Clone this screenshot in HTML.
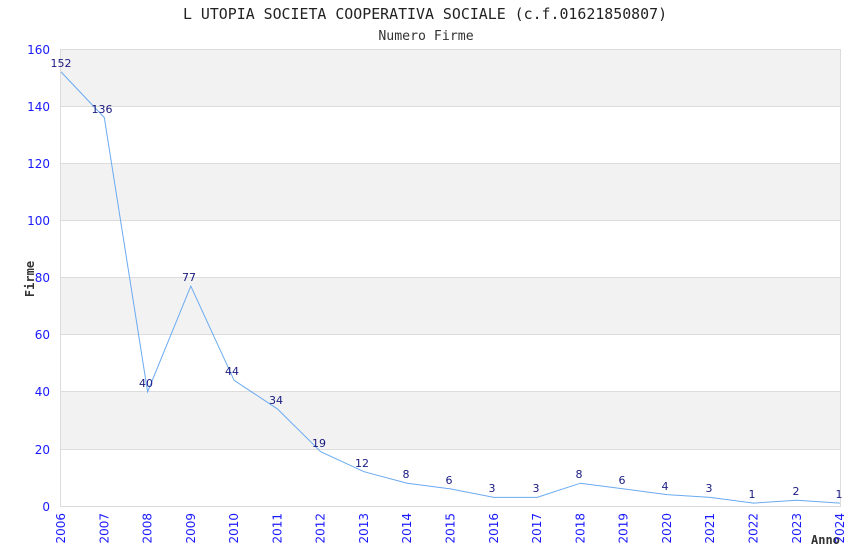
<!DOCTYPE html>
<html><head><meta charset="utf-8"><style>html,body{margin:0;padding:0;background:#fff;}svg{display:block}</style></head>
<body>
<svg width="850" height="550" xmlns="http://www.w3.org/2000/svg">
<rect width="850" height="550" fill="#fff"/>
<text x="425" y="19" text-anchor="middle" font-family="DejaVu Sans Mono, monospace" font-size="14.9" fill="#222">L UTOPIA SOCIETA COOPERATIVA SOCIALE (c.f.01621850807)</text>
<text x="426" y="40" text-anchor="middle" font-family="DejaVu Sans Mono, monospace" font-size="13.2" fill="#333">Numero Firme</text>
<g fill="#f2f2f2">
<rect x="61" y="49" width="779" height="57.1"/>
<rect x="61" y="163.3" width="779" height="57.1"/>
<rect x="61" y="277.5" width="779" height="57.1"/>
<rect x="61" y="391.8" width="779" height="57.1"/>
</g>
<g stroke="#dcdcdc" stroke-width="1">
<line x1="61" y1="49.5" x2="840" y2="49.5"/>
<line x1="61" y1="106.5" x2="840" y2="106.5"/>
<line x1="61" y1="163.5" x2="840" y2="163.5"/>
<line x1="61" y1="220.5" x2="840" y2="220.5"/>
<line x1="61" y1="277.5" x2="840" y2="277.5"/>
<line x1="61" y1="334.5" x2="840" y2="334.5"/>
<line x1="61" y1="391.5" x2="840" y2="391.5"/>
<line x1="61" y1="449.5" x2="840" y2="449.5"/>
<line x1="60.5" y1="49" x2="60.5" y2="506"/>
<line x1="840.5" y1="49" x2="840.5" y2="506"/>
<line x1="60" y1="506.5" x2="841" y2="506.5"/>
</g>
<g font-family="DejaVu Sans, sans-serif" font-size="12" fill="#1a1aff" text-anchor="end">
<text x="50" y="54">160</text><text x="50" y="111">140</text><text x="50" y="168">120</text><text x="50" y="225">100</text>
<text x="50" y="282">80</text><text x="50" y="339">60</text><text x="50" y="396">40</text><text x="50" y="454">20</text><text x="50" y="511">0</text>
</g>
<text transform="translate(34,279) rotate(-90)" text-anchor="middle" font-family="DejaVu Sans Mono, monospace" font-size="12" font-weight="bold" fill="#333">Firme</text>
<text x="811" y="544" font-family="DejaVu Sans Mono, monospace" font-size="12" font-weight="bold" fill="#333">Anno</text>
<polyline fill="none" stroke="#6aaaf0" stroke-width="1" points="61,71.9 104.3,117.6 147.6,391.8 190.8,286.1 234.1,380.3 277.4,408.9 320.7,451.7 364,471.7 407.2,483.2 450.5,488.9 493.8,497.4 537.1,497.4 580.4,483.2 623.6,488.9 666.9,494.6 710.2,497.4 753.5,503.1 796.8,500.3 840,503.1"/>
<g font-family="DejaVu Sans, sans-serif" font-size="11" fill="#1a1a80" text-anchor="middle">
<text x="61" y="67">152</text><text x="102" y="113">136</text><text x="146" y="387">40</text><text x="189" y="281">77</text>
<text x="232" y="375">44</text><text x="276" y="404">34</text><text x="319" y="447">19</text><text x="362" y="467">12</text>
<text x="406" y="478">8</text><text x="449" y="484">6</text><text x="492" y="492">3</text><text x="536" y="492">3</text>
<text x="579" y="478">8</text><text x="622" y="484">6</text><text x="665" y="490">4</text><text x="709" y="492">3</text>
<text x="752" y="498">1</text><text x="796" y="495">2</text><text x="839" y="498">1</text>
</g>
<g font-family="DejaVu Sans, sans-serif" font-size="12" fill="#1a1aff" text-anchor="end">
<text transform="translate(65,513) rotate(-90)">2006</text>
<text transform="translate(108.3,513) rotate(-90)">2007</text>
<text transform="translate(151.6,513) rotate(-90)">2008</text>
<text transform="translate(194.8,513) rotate(-90)">2009</text>
<text transform="translate(238.1,513) rotate(-90)">2010</text>
<text transform="translate(281.4,513) rotate(-90)">2011</text>
<text transform="translate(324.7,513) rotate(-90)">2012</text>
<text transform="translate(368,513) rotate(-90)">2013</text>
<text transform="translate(411.2,513) rotate(-90)">2014</text>
<text transform="translate(454.5,513) rotate(-90)">2015</text>
<text transform="translate(497.8,513) rotate(-90)">2016</text>
<text transform="translate(541.1,513) rotate(-90)">2017</text>
<text transform="translate(584.4,513) rotate(-90)">2018</text>
<text transform="translate(627.6,513) rotate(-90)">2019</text>
<text transform="translate(670.9,513) rotate(-90)">2020</text>
<text transform="translate(714.2,513) rotate(-90)">2021</text>
<text transform="translate(757.5,513) rotate(-90)">2022</text>
<text transform="translate(800.8,513) rotate(-90)">2023</text>
<text transform="translate(844,513) rotate(-90)">2024</text>
</g>
</svg>
</body></html>
